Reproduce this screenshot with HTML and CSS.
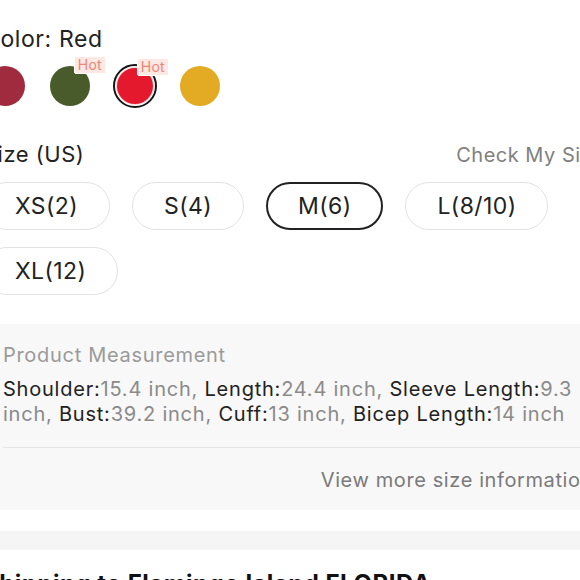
FILE: index.html
```html
<!DOCTYPE html>
<html>
<head>
<meta charset="utf-8">
<link rel="stylesheet" href="styles.css">
</head>
<body>
<div class="page">
  <div class="color-label">Color: Red</div>
  <div class="swatches">
    <div class="swatch"><span class="dot wine"></span></div>
    <div class="swatch"><span class="dot olive"></span><span class="hot">Hot</span></div>
    <div class="swatch selected"><span class="dot red"></span><span class="hot">Hot</span></div>
    <div class="swatch"><span class="dot mustard"></span></div>
  </div>

  <div class="size-head">
    <span class="size-label">Size (US)</span>
    <span class="check">Check My Size</span>
  </div>
  <div class="sizes">
    <span class="size">XS(2)</span>
    <span class="size">S(4)</span>
    <span class="size active">M(6)</span>
    <span class="size">L(8/10)</span>
    <span class="size">XL(12)</span>
  </div>

  <div class="measure">
    <div class="measure-body">
      <div class="measure-title">Product Measurement</div>
      <p class="measure-text"><b>Shoulder:</b>15.4 inch, <b>Length:</b>24.4 inch, <b>Sleeve Length:</b>9.3 inch, <b>Bust:</b>39.2 inch, <b>Cuff:</b>13 inch, <b>Bicep Length:</b>14 inch</p>
    </div>
    <div class="view-more">View more size information</div>
  </div>
</div>
<div class="sep"></div>
<div class="page">
  <div class="ship">Shipping to Flamingo Island FLORIDA</div>
</div>
</body>
</html>
```

FILE: styles.css
```css
html, body {
  margin: 0;
  padding: 0;
  background: #fff;
  overflow: hidden;
}
body {
  font-family: Inter, "Liberation Sans", sans-serif;
  color: #222;
}
.page {
  margin-left: -17px;
  width: 630px;
}
.color-label {
  padding-top: 26px;
  font-size: 23px;
  line-height: 26px;
  letter-spacing: 0.6px;
  color: #222;
}
.swatches {
  display: flex;
  gap: 21px;
  margin-top: 12px;
}
.swatch {
  position: relative;
  width: 44px;
  height: 44px;
  box-sizing: border-box;
  border-radius: 50%;
  display: flex;
  align-items: center;
  justify-content: center;
}
.dot {
  width: 40px;
  height: 40px;
  border-radius: 50%;
  display: block;
}
.wine { background: #a02a3e; }
.olive { background: #4a5b2b; }
.red { background: #e4192e; }
.mustard { background: #e3aa24; }
.swatch.selected {
  border: 2px solid #151515;
}
.swatch.selected .dot {
  width: 36px;
  height: 36px;
  box-shadow: 0 0 0 1px #f6d6d6;
}
.hot {
  position: absolute;
  top: -8px;
  right: -14px;
  background: #fde8e3;
  color: #ec8574;
  font-size: 14px;
  line-height: 16px;
  letter-spacing: 0.3px;
  padding: 0 3px;
  border: 1px solid #fff;
  border-radius: 2px;
}
.size-head {
  display: flex;
  justify-content: space-between;
  align-items: baseline;
  margin-top: 33px;
  padding-right: 9px;
}
.size-label {
  font-size: 22px;
  line-height: 26px;
  letter-spacing: 0.5px;
}
.check {
  font-size: 20px;
  letter-spacing: 0.5px;
  color: #808080;
}
.sizes {
  display: flex;
  flex-wrap: wrap;
  gap: 17px 22px;
  margin-top: 15px;
  width: 590px;
}
.size {
  height: 48px;
  box-sizing: border-box;
  border: 1px solid #e2e2e2;
  border-radius: 24px;
  padding: 0 31px;
  display: flex;
  align-items: center;
  font-size: 23px;
  letter-spacing: 0.4px;
  color: #222;
}
.size.active {
  border: 2px solid #222;
  padding: 0 30px;
}
.measure {
  margin-top: 29px;
  background: #f8f8f8;
  padding: 19px 20px 18px;
}
.measure-body {
  border-bottom: 1px solid #e4e4e4;
  padding-bottom: 20px;
}
.measure-title {
  font-size: 20px;
  line-height: 24px;
  letter-spacing: 0.7px;
  color: #9a9a9a;
}
.measure-text {
  margin: 10px 0 0;
  font-size: 20px;
  line-height: 25px;
  letter-spacing: 0.78px;
  color: #8a8a8a;
}
.measure-text b {
  font-weight: normal;
  color: #222;
}
.view-more {
  margin-top: 20px;
  font-size: 20px;
  line-height: 24px;
  letter-spacing: 0.6px;
  color: #7a7a7a;
  text-align: right;
}
.sep {
  margin-top: 21px;
  height: 19px;
  background: #f5f5f5;
}
.ship {
  margin-top: 19px;
  font-size: 24px;
  font-weight: bold;
  letter-spacing: 0.5px;
  color: #111;
}
```
